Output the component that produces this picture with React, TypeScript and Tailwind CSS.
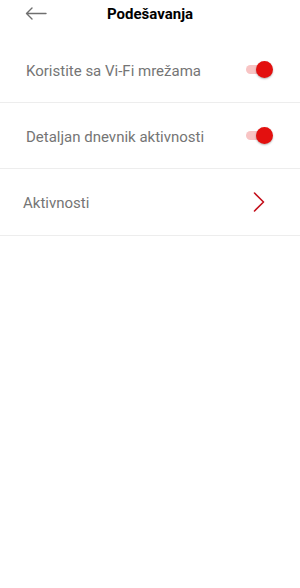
function Toggle() {
  return (
    <div className="relative w-[28px] h-[17px] flex items-center">
      <div className="w-[24px] h-[9px] rounded-full bg-[#f8c4c4] ml-[1px]" />
      <div className="absolute right-0 top-0 w-[17px] h-[17px] rounded-full bg-[#e3100f] shadow-[0_1px_2px_rgba(0,0,0,0.3)]" />
    </div>
  )
}

function ToggleRow({ label }: { label: string }) {
  return (
    <div className="h-[66px] flex items-center justify-between pl-[26px] pr-[27px] border-b border-[#ededed]">
      <span className="text-[15px] text-[#757575] pt-[3px]">{label}</span>
      <Toggle />
    </div>
  )
}

export default function App() {
  return (
    <div className="w-[300px] h-[588px] bg-white" style={{ fontFamily: 'Roboto, "Noto Sans", sans-serif' }}>
      {/* Header */}
      <div className="h-[37px] flex items-start pl-[25px] pt-[5px]">
        <svg width="22" height="13" viewBox="0 0 22 13" fill="none" stroke="#6f6f6f" strokeWidth="1.4" strokeLinecap="round" strokeLinejoin="round" className="mt-[2px]">
          <path d="M21 6.5H1.5M7 1L1.5 6.5L7 12" />
        </svg>
        <h1 className="ml-[60px] text-[15px] leading-[18px] font-bold text-black">Podešavanja</h1>
      </div>

      <ToggleRow label="Koristite sa Vi-Fi mrežama" />
      <ToggleRow label="Detaljan dnevnik aktivnosti" />
      <div className="h-[67px] flex items-center justify-between pl-[23px] pr-[35px] border-b border-[#ededed]">
        <span className="text-[15px] text-[#757575] pt-[3px]">Aktivnosti</span>
        <svg width="12" height="20" viewBox="0 0 12 20" fill="none" stroke="#c4101c" strokeWidth="1.6" strokeLinecap="round" strokeLinejoin="round">
          <path d="M1.5 1L10.5 10L1.5 19" />
        </svg>
      </div>
    </div>
  )
}
